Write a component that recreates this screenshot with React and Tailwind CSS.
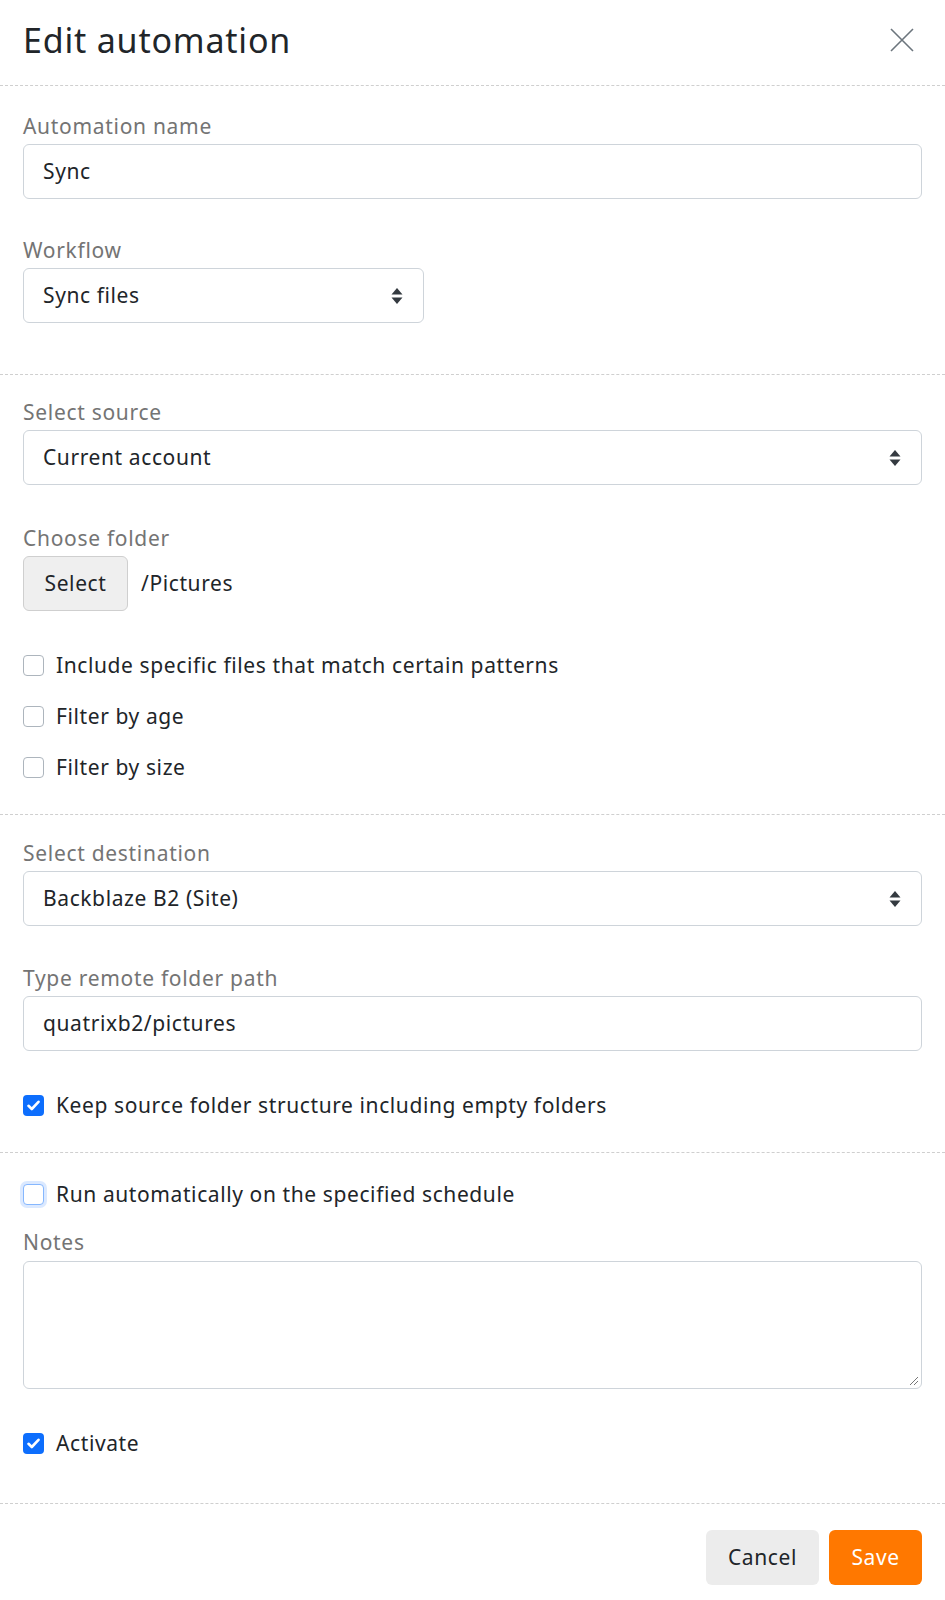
import React from 'react';

const font = { fontFamily: '"Noto Sans", "Open Sans", sans-serif' };

function Arrows() {
  return (
    <svg width="12" height="18" viewBox="0 0 12 18" className="shrink-0">
      <path d="M6 1 L11.5 7.5 H0.5 Z" fill="#343a40" />
      <path d="M6 17 L11.5 10.5 H0.5 Z" fill="#343a40" />
    </svg>
  );
}

function Label({ children, className = 'mb-[3px]' }) {
  return <div className={`text-[21px] leading-[29px] tracking-[0.7px] text-[#747474] ${className}`}>{children}</div>;
}

function Select({ value, className = 'w-full' }) {
  return (
    <div className={`${className} h-[55px] flex items-center justify-between pl-[19px] pr-[20px] border border-[#ced4da] rounded-[6px] text-[21px] tracking-[0.6px] text-[#212529]`}>
      <span>{value}</span>
      <Arrows />
    </div>
  );
}

function Input({ value }) {
  return (
    <div className="w-full h-[55px] flex items-center px-[19px] border border-[#ced4da] rounded-[6px] text-[21px] tracking-[0.6px] text-[#212529]">
      {value}
    </div>
  );
}

function Check({ checked, focus, children }) {
  return (
    <div className="flex items-center gap-[12px] text-[21px] leading-[29px] tracking-[0.6px] text-[#212529]">
      {checked ? (
        <span className="w-[21px] h-[21px] rounded-[4px] bg-[#0d6efd] flex items-center justify-center shrink-0">
          <svg width="13" height="11" viewBox="0 0 13 11">
            <path d="M1.5 5.8 L4.8 9 L11.5 1.8" stroke="white" strokeWidth="2.6" fill="none" strokeLinecap="round" strokeLinejoin="round" />
          </svg>
        </span>
      ) : (
        <span className={`w-[21px] h-[21px] rounded-[4px] border bg-white shrink-0 ${focus ? 'border-[#86b7fe] ring-[3px] ring-[#0d6efd]/15' : 'border-[#adb5bd]'}`}></span>
      )}
      <span>{children}</span>
    </div>
  );
}

export default function App() {
  return (
    <div className="w-full bg-white" style={font}>
      <div className="h-[86px] flex items-center justify-between pl-[23px] pr-[31px] border-b border-dashed border-[#cfcfcf]">
        <h1 className="text-[34px] leading-none tracking-[0.8px] text-[#212529] pb-[6px]">Edit automation</h1>
        <svg width="24" height="24" viewBox="0 0 24 24" className="mb-[6px]">
          <path d="M1 1 L23 23 M23 1 L1 23" stroke="#6c757d" strokeWidth="1.6" />
        </svg>
      </div>

      <div className="px-[23px] pt-[26px] pb-[51px] border-b border-dashed border-[#cfcfcf]">
        <Label>Automation name</Label>
        <Input value="Sync" />
        <Label className="mt-[37px] mb-[3px]">Workflow</Label>
        <Select value="Sync files" className="w-[401px]" />
      </div>

      <div className="px-[23px] pt-[23px] pb-[32px] border-b border-dashed border-[#cfcfcf]">
        <Label>Select source</Label>
        <Select value="Current account" />
        <Label className="mt-[39px] mb-[3px]">Choose folder</Label>
        <div className="flex items-center gap-[13px]">
          <div className="h-[55px] w-[105px] flex items-center justify-center bg-[#efefef] border border-[#cfcfcf] rounded-[6px] text-[21px] tracking-[0.6px] text-[#212529]">Select</div>
          <span className="text-[21px] tracking-[0.6px] text-[#212529]">/Pictures</span>
        </div>
        <div className="mt-[40px] flex flex-col gap-[22px]">
          <Check>Include specific files that match certain patterns</Check>
          <Check>Filter by age</Check>
          <Check>Filter by size</Check>
        </div>
      </div>

      <div className="px-[23px] pt-[24px] pb-[32px] border-b border-dashed border-[#cfcfcf]">
        <Label>Select destination</Label>
        <Select value="Backblaze B2 (Site)" />
        <Label className="mt-[38px] mb-[3px]">Type remote folder path</Label>
        <Input value="quatrixb2/pictures" />
        <div className="mt-[40px]">
          <Check checked>Keep source folder structure including empty folders</Check>
        </div>
      </div>

      <div className="px-[23px] pt-[27px] pb-[45px] border-b border-dashed border-[#cfcfcf]">
        <Check focus>Run automatically on the specified schedule</Check>
        <Label className="mt-[19px] mb-[4px]">Notes</Label>
        <div className="relative w-full h-[128px] border border-[#ced4da] rounded-[6px]">
          <svg width="12" height="12" viewBox="0 0 12 12" className="absolute right-[2px] bottom-[2px]">
            <path d="M11 3 L3 11 M11 7 L7 11" stroke="#777" strokeWidth="1" />
          </svg>
        </div>
        <div className="mt-[40px]">
          <Check checked>Activate</Check>
        </div>
      </div>

      <div className="px-[23px] pt-[26px] pb-[10px] flex justify-end gap-[10px]">
        <div className="h-[55px] w-[113px] flex items-center justify-center bg-[#ececec] rounded-[6px] text-[21px] tracking-[0.6px] text-[#212529]">Cancel</div>
        <div className="h-[55px] w-[93px] flex items-center justify-center bg-[#ff7800] rounded-[6px] text-[21px] tracking-[0.6px] text-white">Save</div>
      </div>
    </div>
  );
}
